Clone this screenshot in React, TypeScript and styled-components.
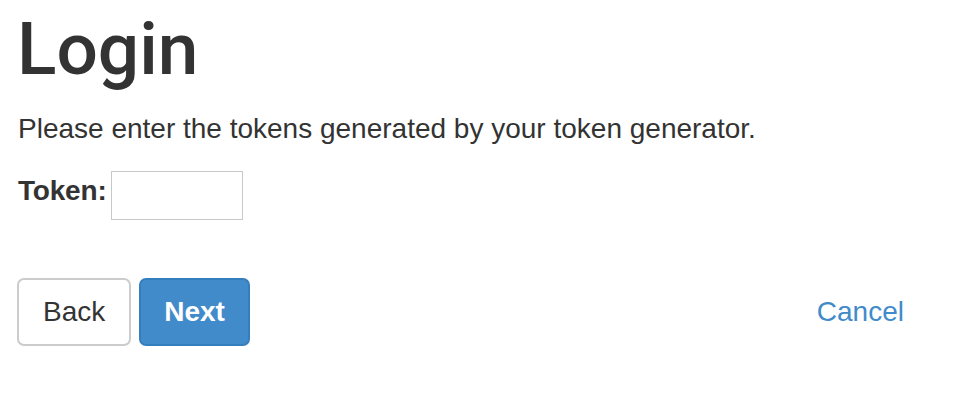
import React from 'react'
import styled, { createGlobalStyle } from 'styled-components'

const GlobalStyle = createGlobalStyle`
  html, body {
    margin: 0;
    padding: 0;
    background: #ffffff;
  }
  body {
    font-family: "Liberation Sans", Arial, Helvetica, sans-serif;
    font-size: 28px;
    line-height: 40px;
    color: #333333;
  }
`

const Page = styled.div`
  padding: 10px 38px 0 17px;
`

const Title = styled.h1`
  margin: 0 0 20px;
  font-family: Roboto, "Liberation Sans", Arial, sans-serif;
  font-size: 73px;
  font-weight: 500;
  line-height: 79px;
  color: #333333;
`

const Intro = styled.p`
  margin: 0 0 22px 1px;
`

const FieldRow = styled.div`
  display: flex;
  align-items: flex-start;
  gap: 4px;
  margin-left: 1px;
`

const Label = styled.label`
  font-weight: 700;
  line-height: 40px;
  letter-spacing: -0.2px;
`

const TokenInput = styled.input`
  box-sizing: border-box;
  width: 132px;
  height: 49px;
  margin: 0;
  border: 1px solid #c8c8c8;
  border-radius: 0;
  padding: 0 8px;
  font-size: 24px;
  font-family: inherit;
  outline: none;
`

const Actions = styled.div`
  display: flex;
  align-items: center;
  gap: 8px;
  margin-top: 58px;
`

const Button = styled.button<{ $primary?: boolean }>`
  box-sizing: border-box;
  height: 68px;
  padding: 12px ${({ $primary }) => ($primary ? '23px' : '24px')};
  border-radius: 7px;
  border: 2px solid ${({ $primary }) => ($primary ? '#357ebd' : '#cccccc')};
  background: ${({ $primary }) => ($primary ? '#428bca' : '#ffffff')};
  color: ${({ $primary }) => ($primary ? '#ffffff' : '#333333')};
  font-family: inherit;
  font-size: 28px;
  line-height: 40px;
  font-weight: ${({ $primary }) => ($primary ? 700 : 400)};
  cursor: pointer;
`

const CancelLink = styled.a`
  margin-left: auto;
  padding: 12px 24px;
  border: 2px solid transparent;
  font-size: 28px;
  line-height: 40px;
  color: #428bca;
  text-decoration: none;
  cursor: pointer;
`

export default function App() {
  return (
    <>
      <GlobalStyle />
      <Page>
        <Title>Login</Title>
        <Intro>Please enter the tokens generated by your token generator.</Intro>
        <FieldRow>
          <Label htmlFor="token">Token:</Label>
          <TokenInput id="token" type="text" />
        </FieldRow>
        <Actions>
          <Button>Back</Button>
          <Button $primary>Next</Button>
          <CancelLink>Cancel</CancelLink>
        </Actions>
      </Page>
    </>
  )
}
